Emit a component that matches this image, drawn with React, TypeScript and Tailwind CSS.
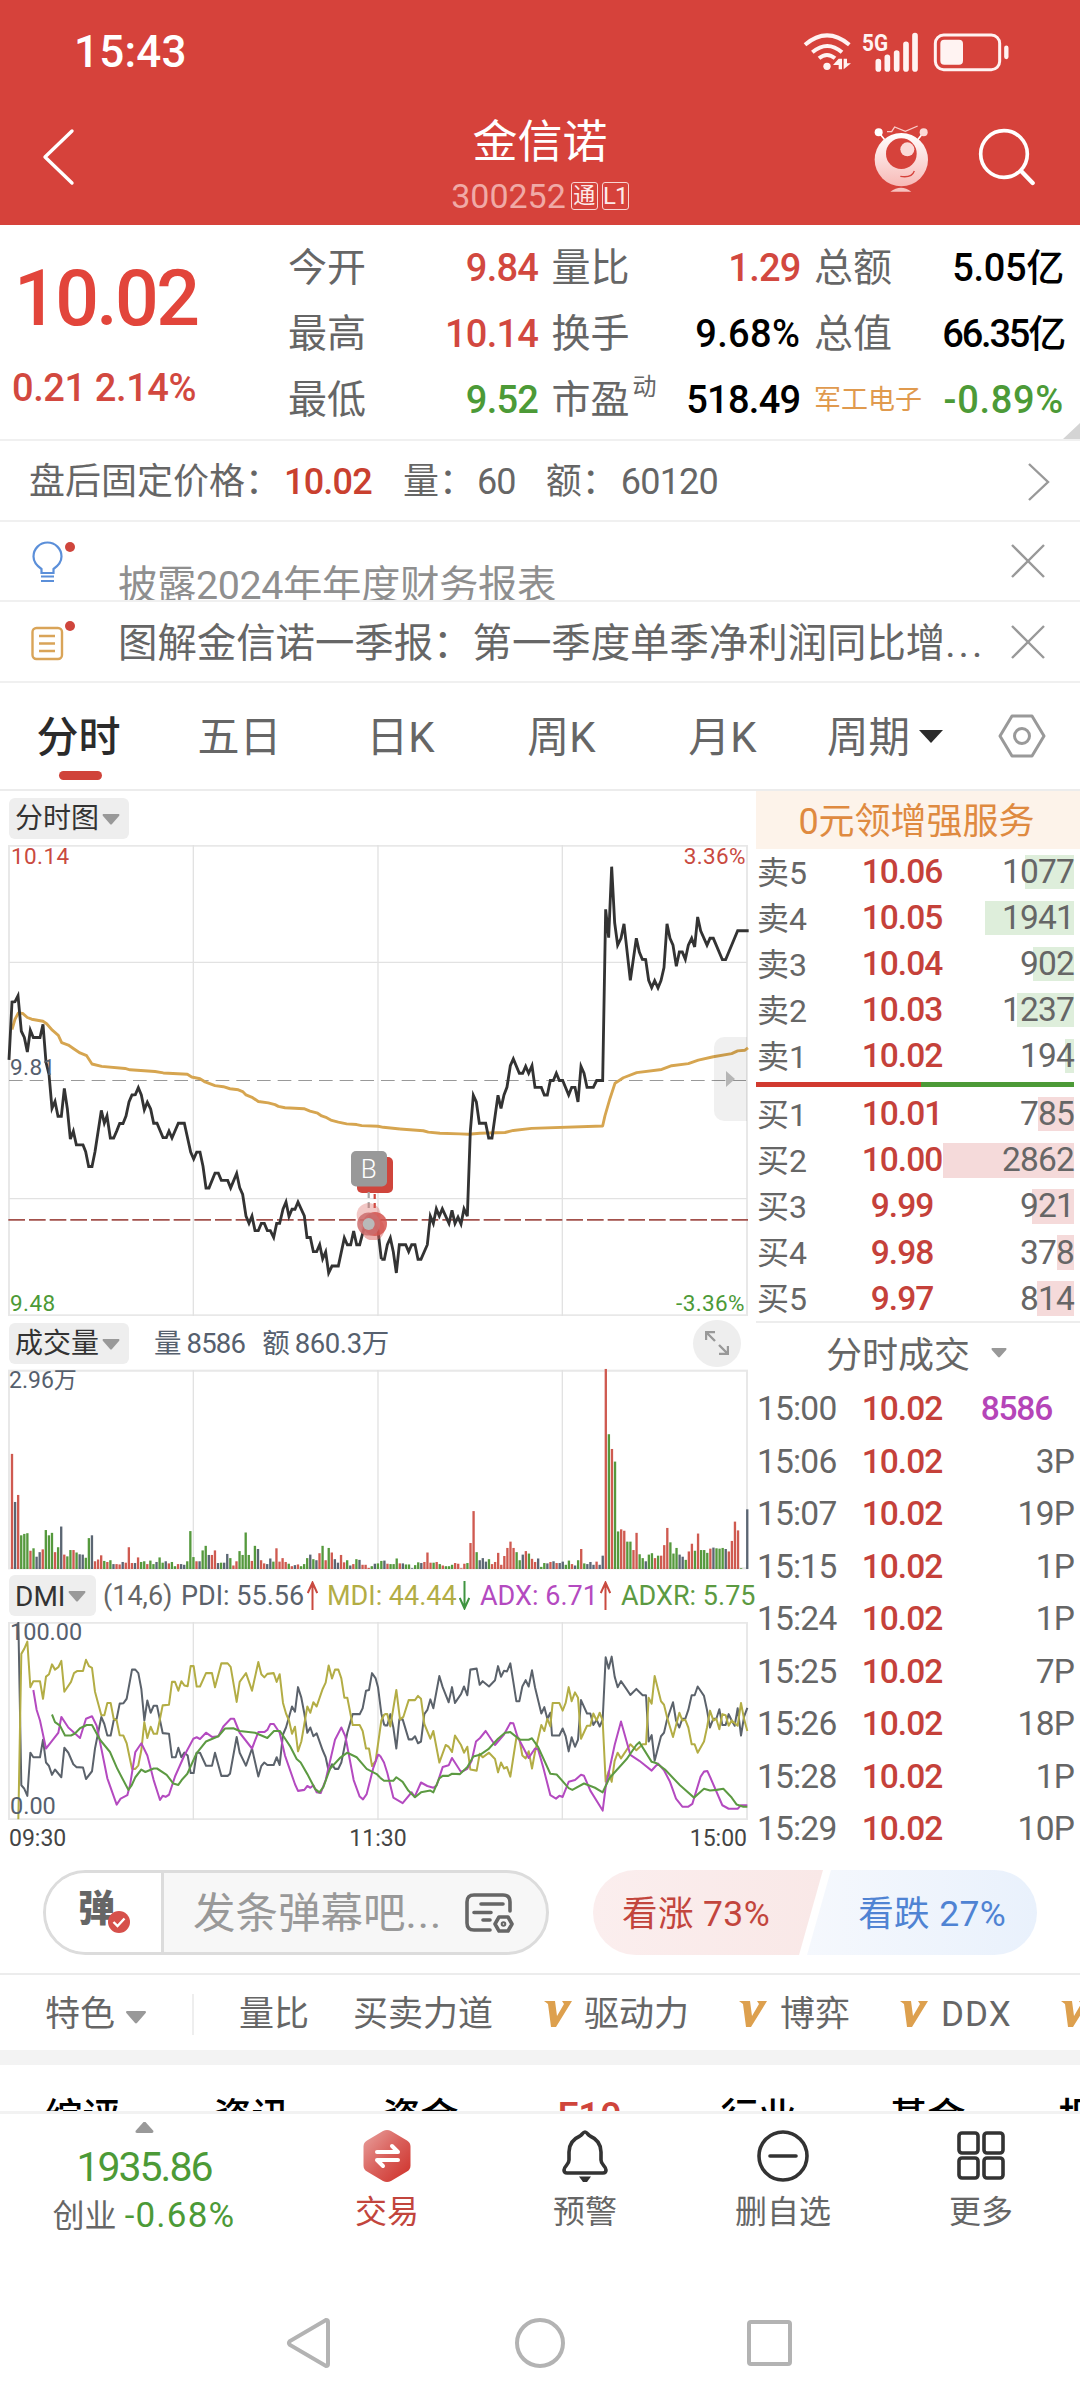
import React from 'react';
import { clsx } from 'clsx';

const PRICE_AM =
  '27,783 36,615 45,614 54,597 64,700 73,718 82,760 91,697 100,718 120,718 129,680 138,790 147,825 156,924 165,904 174,947 184,947 193,866 202,925 211,1013 220,990 229,1030 249,1030 257,1050 266,1093 276,1093 285,1050 304,930 313,967 321,946 331,1010 341,1010 350,990 359,968 369,968 378,946 387,905 396,885 406,884 415,864 424,885 433,928 442,906 452,926 461,967 471,967 489,1009 499,1009 507,990 516,1010 535,967 553,967 572,1051 581,1071 590,1051 600,1051 609,1092 618,1155 627,1155 645,1112 655,1112 664,1133 683,1133 692,1155 710,1113 719,1154 728,1174 738,1237 747,1258 756,1237 765,1279 775,1279 784,1258 793,1258 802,1279 811,1279 821,1299 830,1258 839,1258 849,1217 858,1196 867,1238 876,1217 885,1217 894,1196 913,1236 921,1299 931,1299 940,1340 950,1340 959,1320 968,1361 977,1341 986,1402 996,1382 1015,1382 1033,1300 1042,1320 1052,1320 1061,1280 1070,1320 1079,1320 1090,1280 1110,1240 1134,1279 1144,1362';
const PRICE_PM =
  '4,1362 13,1362 22,1320 31,1300 40,1341 49,1402 58,1320 77,1320 86,1340 95,1320 105,1320 114,1362 123,1362 142,1320 151,1237 160,1258 169,1216 178,1237 187,1216 207,1258 216,1220 225,1258 234,1240 243,1260 252,1216 262,1237 271,990 280,886 289,905 298,967 317,967 326,1010 336,1010 354,886 363,924 372,885 381,862 391,800 400,780 418,822 428,822 437,802 446,822 456,800 465,863 484,863 493,885 502,885 511,843 520,843 529,822 538,843 548,843 566,885 575,863 585,863 594,905 603,802 612,822 621,863 640,863 650,843 668,843 677,346 686,428 695,222 704,385 713,450 723,430 732,388 751,552 769,430 778,470 787,491 797,492 806,552 815,573 824,553 834,574 843,553 852,515 861,388 870,430 879,450 889,511 898,470 907,470 916,491 925,450 935,430 944,455 953,368 962,408 981,450 990,430 1000,430 1027,492 1037,492 1073,408 1106,408';
const AVG_AM =
  '36,695 45,665 55,647 68,648 82,660 95,665 129,671 140,678 157,697 175,712 185,733 205,740 220,750 240,763 260,771 276,795 305,802 375,808 390,812 465,817 490,821 562,825 575,833 600,838 615,847 645,858 670,861 690,867 715,870 728,875 738,885 758,893 775,904 805,908 825,913 835,918 855,922 912,925 930,932 953,938 965,946 980,951 995,959 1015,964 1040,969 1070,971 1085,974 1134,976 1150,979 1200,984';
const AVG_PM =
  '60,984 130,989 145,993 180,996 240,998 265,999 300,996 375,994 400,988 455,982 668,975 675,945 690,895 705,851 730,835 770,820 845,811 875,800 925,794 955,784 1000,774 1055,765 1073,757 1095,755 1104,748';

const VOL_AM =
  'r328 k191 r211 g96 g100 g102 r52 g59 k35 k48 r56 g111 g96 g103 r48 g62 k121 r41 g36 g54 r54 g47 k42 k41 g32 g88 k96 r22 r27 r39 g23 r20 g25 k14 r14 r13 k20 r18 r62 r17 k17 r33 g20 g22 r14 g24 g14 k20 g33 g18 k22 r16 g20 g8 r14 k14 k12 g22 g108 g34 r22 k22 g53 g66 k40 r40 r53 k17 g18 k18 k43 g31 r10 r22 g51 g40 g104 g40 r23 g66 k57 r25 r16 k14 k30 g21 r59 r21 r31 r20 g15 r8 k11 r13 g8 g14 g31 k41 g28 k25 r45 g66 r25 g60 r47 k28 k18 r40 r19 g25 k10 r14 g28 k26 r12 r12 r3 g8 k15 g16';
const VOL_PM =
  'g23 k24 r15 g14 g14 g30 r16 k16 g13 g13 k2 g11 g19 k17 r20 r47 r18 g18 r20 g14 r10 g8 g8 g12 r17 r15 r2 r15 g17 r74 r165 g48 k25 k31 k21 g28 r14 r20 r46 r12 r37 r60 r78 r60 g48 g25 k41 r51 g44 r29 r20 k30 g6 g17 k16 r20 k22 r17 k17 k21 g12 g24 r14 k10 g25 r57 g16 k14 k20 k12 r21 k12 k38 r570 g384 r342 g306 g107 r113 r109 g78 g78 r54 r103 g42 g31 k22 g41 g45 r31 g38 r38 r68 r117 g76 g44 g60 k41 k35 g26 r50 r72 g52 r101 g54 g54 g46 r58 k61 g59 g58 g60 k57 r50 r80 r135 r110 g2 g0 k170';

const DMI_LINES = [
  {
    color: '#5b626b',
    am: '55,887 64,1355 73,1365 82,1385 91,1262 100,1275 120,1275 129,1225 138,1290 147,1300 156,1325 165,1310 184,1332 193,1248 205,1262 220,1295 229,1303 249,1304 258,1337 276,1315 285,1250 304,1160 313,1180 322,1213 332,1213 341,1170 350,1165 359,1122 370,1121 380,1108 396,1025 406,1025 415,1035 424,1080 433,1170 442,1113 452,1148 461,1128 471,1128 488,1206 507,1208 516,1275 527,1275 535,1248 544,1275 553,1262 563,1270 572,1320 581,1320 590,1262 600,1262 618,1299 636,1299 645,1262 664,1328 683,1328 690,1322 710,1217 719,1262 738,1299 756,1250 775,1330 784,1300 793,1290 802,1297 821,1297 830,1275 839,1297 849,1210 858,1190 876,1130 885,1145 894,1075 904,1105 913,1150 922,1205 931,1190 940,1215 950,1207 968,1255 977,1275 986,1315 996,1295 1005,1308 1015,1308 1024,1290 1042,1205 1058,1152 1079,1152 1088,1135 1098,1085 1107,1083 1116,1035 1127,1050 1134,1075 1144,1150 1153,1184',
    pm: '13,1184 22,1184 31,1152 40,1190 49,1250 58,1167 68,1167 86,1224 96,1224 105,1215 114,1235 123,1230 133,1152 142,1140 151,1110 160,1135 178,1043 188,1075 206,1118 216,1075 225,1120 243,1095 252,1073 262,1098 271,1025 290,1022 299,1068 308,1058 327,1073 345,1055 354,1015 363,1045 372,1028 381,1030 391,1007 400,1060 409,1115 418,1115 427,1073 437,1055 446,1073 456,1027 465,1075 484,1150 493,1132 502,1165 511,1148 516,1213 538,1213 548,1193 557,1215 566,1258 575,1218 585,1245 594,1225 603,1112 621,1150 631,1150 640,1183 650,1168 659,1187 668,1168 677,990 686,1022 695,988 704,1045 713,1075 723,1058 741,1083 751,1097 769,1080 788,1098 798,1098 806,1230 815,1212 824,1285 843,1215 852,1205 861,1168 879,1118 888,1170 898,1190 907,1165 916,1165 925,1140 935,1098 944,1098 953,1073 972,1100 981,1140 990,1190 1000,1165 1009,1165 1018,1138 1027,1183 1037,1183 1046,1152 1055,1170 1064,1185 1073,1135 1083,1213 1092,1160 1102,1134',
  },
  {
    color: '#b3ad45',
    am: '55,1452 64,980 73,965 82,945 91,1075 100,1058 120,1058 129,1108 138,1045 147,1038 156,1010 165,1025 175,1018 184,1000 193,1088 213,1060 222,1035 231,1029 249,1029 258,997 267,1015 276,1020 285,1088 304,1155 313,1155 322,1120 332,1120 341,1165 350,1170 359,1212 370,1213 380,1235 396,1308 406,1308 415,1298 424,1255 433,1175 442,1220 452,1188 461,1208 471,1208 488,1127 507,1125 516,1060 525,1060 535,1085 544,1058 553,1070 563,1072 572,1015 581,1015 590,1073 600,1073 618,1035 636,1035 645,1075 664,1007 683,1007 692,1017 710,1117 719,1060 738,1035 756,1085 775,1003 784,1038 793,1047 802,1037 821,1035 830,1060 839,1038 849,1120 858,1150 867,1170 876,1208 885,1188 894,1258 904,1230 922,1130 931,1148 940,1118 950,1130 968,1080 977,1062 986,1013 996,1050 1005,1025 1015,1025 1024,1050 1033,1105 1042,1105 1058,1183 1079,1183 1088,1200 1098,1250 1107,1250 1116,1300 1127,1285 1144,1170 1153,1152',
    pm: '13,1152 22,1152 31,1187 49,1083 60,1167 70,1160 86,1112 105,1112 114,1100 123,1108 133,1180 151,1222 160,1200 178,1290 197,1240 206,1245 216,1260 225,1213 243,1240 252,1262 262,1245 271,1310 290,1313 299,1265 308,1275 327,1262 345,1280 354,1318 363,1290 372,1307 381,1303 391,1330 400,1275 409,1220 418,1222 427,1270 437,1278 446,1258 456,1307 465,1260 484,1183 493,1200 502,1165 511,1187 518,1120 538,1120 548,1142 557,1120 566,1075 575,1115 585,1090 594,1105 603,1222 621,1185 631,1185 640,1150 650,1170 659,1148 668,1170 677,1345 686,1315 695,1345 704,1285 713,1262 723,1278 751,1238 769,1255 788,1238 798,1238 806,1105 815,1122 824,1043 843,1115 852,1125 861,1160 879,1217 898,1148 907,1170 916,1168 925,1190 935,1238 944,1238 953,1262 972,1230 981,1190 990,1142 1000,1170 1009,1165 1018,1195 1027,1152 1037,1155 1046,1185 1055,1170 1073,1185 1083,1120 1092,1165 1102,1200',
  },
  {
    color: '#b44ac0',
    am: '100,1083 110,1140 120,1170 138,1250 156,1228 175,1205 184,1160 205,1190 220,1203 240,1220 258,1165 276,1158 290,1185 304,1250 322,1335 350,1410 362,1393 382,1383 390,1355 406,1260 424,1235 442,1270 461,1340 480,1397 488,1385 497,1388 507,1382 525,1330 553,1270 580,1222 590,1218 600,1223 618,1205 636,1217 655,1215 670,1187 692,1165 702,1165 719,1205 756,1250 775,1203 793,1203 802,1197 811,1180 821,1180 839,1205 855,1270 885,1352 894,1371 913,1368 922,1357 931,1362 940,1355 950,1375 962,1377 977,1340 1005,1225 1024,1190 1036,1215 1061,1340 1079,1387 1089,1395 1100,1380 1120,1305 1134,1268 1140,1270',
    pm: '0,1270 12,1290 22,1320 40,1390 68,1406 95,1375 104,1388 123,1347 142,1357 160,1362 170,1355 188,1303 206,1298 216,1277 243,1317 262,1308 275,1285 288,1230 300,1220 317,1200 345,1240 372,1210 391,1177 400,1178 412,1215 446,1277 465,1250 474,1252 490,1305 511,1383 528,1393 538,1385 548,1388 566,1345 585,1340 603,1325 612,1328 631,1370 668,1427 677,1360 704,1240 723,1173 751,1268 778,1285 815,1313 834,1293 852,1312 870,1345 888,1393 907,1416 925,1416 937,1408 962,1330 972,1316 982,1314 992,1335 1027,1412 1046,1422 1073,1422 1083,1412 1102,1412',
  },
  {
    color: '#5c9a42',
    am: '156,1153 165,1175 180,1185 195,1213 213,1213 225,1207 240,1192 260,1183 276,1183 300,1225 330,1260 352,1308 385,1368 395,1355 406,1332 424,1310 436,1317 461,1307 471,1307 500,1325 520,1350 535,1354 545,1340 562,1322 590,1263 618,1230 655,1215 675,1193 700,1192 719,1200 765,1205 802,1220 822,1200 840,1200 870,1243 890,1280 902,1290 922,1323 945,1365 958,1375 970,1360 990,1308 1020,1277 1042,1262 1070,1275 1100,1308 1130,1323 1140,1333',
    pm: '0,1333 12,1342 40,1342 49,1332 68,1345 85,1370 105,1389 123,1375 151,1370 160,1375 178,1335 188,1328 205,1328 216,1322 240,1323 262,1303 280,1273 300,1268 325,1252 354,1222 375,1205 391,1203 420,1225 446,1225 456,1221 474,1245 511,1322 530,1324 566,1363 577,1368 612,1350 645,1362 668,1375 688,1335 740,1280 769,1240 778,1232 815,1288 830,1292 855,1310 900,1355 942,1390 972,1365 990,1370 1010,1368 1030,1365 1055,1390 1070,1410 1090,1416 1102,1416',
  },
];

const BAR_COLORS: Record<string, string> = { r: '#cf5a50', g: '#55993d', k: '#5b6673' };

const ASKS = [
  { label: '卖5', price: '10.06', qty: 1077 },
  { label: '卖4', price: '10.05', qty: 1941 },
  { label: '卖3', price: '10.04', qty: 902 },
  { label: '卖2', price: '10.03', qty: 1237 },
  { label: '卖1', price: '10.02', qty: 194 },
];

const BIDS = [
  { label: '买1', price: '10.01', qty: 785 },
  { label: '买2', price: '10.00', qty: 2862 },
  { label: '买3', price: '9.99', qty: 921 },
  { label: '买4', price: '9.98', qty: 378 },
  { label: '买5', price: '9.97', qty: 814 },
];

const TICKS = [
  { time: '15:00', vol: '8586' },
  { time: '15:06', vol: '3P' },
  { time: '15:07', vol: '19P' },
  { time: '15:15', vol: '1P' },
  { time: '15:24', vol: '1P' },
  { time: '15:25', vol: '7P' },
  { time: '15:26', vol: '18P' },
  { time: '15:28', vol: '1P' },
  { time: '15:29', vol: '10P' },
];

const QUOTES = [
  { label: '今开', value: '9.84', color: 'text-[#d2483f] tracking-[-0.8px]' },
  { label: '量比', value: '1.29', color: 'text-[#d2483f] tracking-[-0.8px]' },
  { label: '总额', value: '5.05亿', color: 'text-black tracking-[-0.3px]' },
  { label: '最高', value: '10.14', color: 'text-[#d2483f] tracking-[-0.8px]' },
  { label: '换手', value: '9.68%', color: 'text-black tracking-[0.4px]' },
  { label: '总值', value: '66.35亿', color: 'text-black tracking-[-2.2px]' },
  { label: '最低', value: '9.52', color: 'text-[#4c9a37] tracking-[-0.8px]' },
  { label: '市盈', sup: '动', value: '518.49', color: 'text-black tracking-[-0.7px]' },
  { label: '军工电子', tag: true, value: '-0.89%', color: 'text-[#4c9a37] tracking-[0.7px]' },
];

const TABS = ['分时', '五日', '日K', '周K', '月K'];
const SECTIONS = ['综评', '资讯', '资金', 'F10', '行业', '基金', '报告'];

export default function App() {
  return (
    <div className="flex h-[2400px] w-[1080px] flex-col overflow-hidden bg-white font-['Roboto','Noto_Sans_CJK_SC',sans-serif] text-[#666]">
      <Header />
      <Quote />
      <FixedPrice />
      <Notices />
      <PeriodTabs />
      <div className="flex h-[1070px] shrink-0">
        <Charts />
        <OrderBook />
      </div>
      <Danmu />
      <Features />
      <div className="h-[15px] shrink-0 bg-[#f3f3f3]" />
      <div className="-ml-[2px] flex h-[46px] w-[1190px] shrink-0 items-start overflow-hidden pt-[30px]">
        {SECTIONS.map((s) => (
          <div
            key={s}
            className={clsx(
              'w-[169px] shrink-0 text-center text-[38px] leading-[44px] font-medium',
              s === 'F10' ? 'text-[#cf453c]' : 'text-black'
            )}
          >
            {s}
          </div>
        ))}
      </div>
      <BottomBar />
      <SystemNav />
    </div>
  );
}

function Header() {
  return (
    <header className="h-[225px] shrink-0 bg-[#d6423b] text-white">
      <div className="flex h-[102px] items-center justify-between pt-px pr-[66px] pl-[74px]">
        <span className="text-[44px] leading-none font-medium tracking-[0.2px]">15:43</span>
        <svg className="h-[42px] w-[214px] overflow-visible" viewBox="60 28 642 126" fill="none" stroke="#fff3f2">
          <path d="M75 69q66-56 133 0M97 92q45-38 89 0M117 110q24-20 48 0" strokeWidth="12" />
          <circle cx="141" cy="134" r="11" fill="#fff3f2" stroke="none" />
          <path d="M176 111v32h10v-32zM176 111l-17 19h17zM191 111v32l22-18h-12v-14z" fill="#fff3f2" stroke="none" />
          <text x="246" y="89" fontSize="72" fontWeight="700" textLength="78" lengthAdjust="spacingAndGlyphs" fill="#fff3f2" stroke="none">5G</text>
          <path d="M295 120v22M322 107v35M350 94v48M378 68v74M405 42v100" strokeWidth="17" strokeLinecap="round" />
          <rect x="466" y="40" width="193" height="104" rx="25" strokeWidth="9" />
          <rect x="481" y="54" width="68" height="75" rx="12" fill="#fff3f2" stroke="none" />
          <path d="M679 78v28" strokeWidth="13" strokeLinecap="round" />
        </svg>
      </div>
      <div className="grid h-[123px] grid-cols-[1fr_auto_1fr]">
        <div className="pt-[26px] pl-[41px]">
          <svg className="h-[58px] w-[34px]" viewBox="0 0 34 58" fill="none" stroke="#fff" strokeWidth="3.4">
            <path d="M31 3 4 29l27 26" strokeLinecap="round" strokeLinejoin="round" />
          </svg>
        </div>
        <div className="flex flex-col items-center">
          <div className="mt-[15px] text-[45px] leading-[52px]">金信诺</div>
          <div className="mt-[10px] flex items-center gap-[5px]">
            <span className="text-[34px] leading-[34px] text-[#f0aaa6]">300252</span>
            <span className="flex h-[28px] w-[27px] items-center justify-center rounded-[3px] border border-[#f8d5d3] text-[22px] leading-none text-[#fdebea]">通</span>
            <span className="-ml-[1px] flex h-[28px] w-[27px] items-center justify-center rounded-[3px] border border-[#f8d5d3] text-[24px] leading-none tracking-[-1px] text-[#fdebea]">L1</span>
          </div>
        </div>
        <div className="flex justify-end pr-[43px]">
          <svg className="mt-[21px] mr-[2px] h-[72px] w-[60px]" viewBox="268 305 180 216" fill="none">
            <defs>
              <linearGradient id="bot" x1="0" y1="0" x2="0" y2="1">
                <stop offset="0" stopColor="#fff" />
                <stop offset="1" stopColor="#f7b9b6" />
              </linearGradient>
            </defs>
            <path d="M291 333l18 22M426 333l-18 22" stroke="#fff" strokeWidth="5" />
            <circle cx="291" cy="333" r="12" fill="#fff" />
            <circle cx="426" cy="333" r="12" fill="#fbd9d7" />
            <path d="M316 331h14l9-14 32 13 37-16" stroke="#f9cfcc" strokeWidth="4" />
            <circle cx="359" cy="415" r="80" fill="url(#bot)" />
            <circle cx="359" cy="397" r="46" fill="#d6423b" />
            <circle cx="377" cy="384" r="21" fill="#fbd9d7" />
            <path d="M356 465q34 6 42-16" stroke="#d6423b" strokeWidth="4" />
            <path d="M326 511q32-24 63 0z" fill="#f7c3c0" />
          </svg>
          <svg className="mt-[24px] ml-[44px] h-[60px] w-[60px]" viewBox="590 320 180 180" fill="none" stroke="#fff" strokeLinecap="round">
            <circle cx="671" cy="404" r="70" strokeWidth="11" />
            <path d="M723 456l34 35" strokeWidth="13" />
          </svg>
        </div>
      </div>
    </header>
  );
}

function Quote() {
  return (
    <section className="relative flex h-[216px] shrink-0 border-b-2 border-[#f0f0f0]">
      <div className="w-[289px] shrink-0">
        <div className="mt-[41px] pl-[14px] text-[77px] leading-[66px] font-medium tracking-[-2.6px] text-[#e2453b]">10.02</div>
        <div className="mt-[36px] pl-[12px] text-[38px] leading-[40px] font-medium tracking-[-0.4px] whitespace-nowrap text-[#d2483f]">0.21 2.14%</div>
      </div>
      <div className="grid w-[774px] grid-cols-[248px_247px_248px] content-start gap-x-[15.5px] pt-[10px]">
        {QUOTES.map((q) => (
          <div key={q.label} className="-mr-px flex h-[66px] items-center justify-between">
            <span className={clsx('-ml-px whitespace-nowrap', q.tag ? 'text-[27px]' : 'text-[39px]', q.tag && 'text-[#e09a4e]')}>
              {q.label}
              {q.sup && <sup className="relative -top-[18px] ml-[3px] text-[24px]">{q.sup}</sup>}
            </span>
            <span className={clsx('text-[38px] font-medium whitespace-nowrap', q.color)}>{q.value}</span>
          </div>
        ))}
      </div>
      <svg className="absolute right-0 bottom-0 h-[16px] w-[17px]" viewBox="0 0 17 16">
        <path d="M17 0v16H0z" fill="#d4d4d4" />
      </svg>
    </section>
  );
}

function FixedPrice() {
  return (
    <section className="flex h-[81px] shrink-0 items-center border-b-2 border-[#f0f0f0] pt-[2px] pr-[29px] pl-[29px] text-[36px] leading-none">
      <span>盘后固定价格：</span>
      <span className="ml-[3px] font-medium tracking-[-0.8px] text-[#c9402f]">10.02</span>
      <span className="ml-[31px]">量：</span>
      <span className="ml-[2px] tracking-[-0.8px]">60</span>
      <span className="ml-[30px]">额：</span>
      <span className="ml-[3px] tracking-[-0.8px]">60120</span>
      <svg className="ml-auto h-[40px] w-[24px]" viewBox="0 0 24 40" fill="none" stroke="#999" strokeWidth="2.4">
        <path d="m2 2 19 18L2 38" />
      </svg>
    </section>
  );
}

function CloseIcon() {
  return (
    <svg className="h-[36px] w-[36px]" viewBox="0 0 36 36" fill="none" stroke="#999" strokeWidth="2.4">
      <path d="m2 2 32 32M34 2 2 34" />
    </svg>
  );
}

function Notices() {
  return (
    <>
      <section className="flex h-[80px] shrink-0 items-start overflow-hidden border-b-2 border-[#f0f0f0] pr-[34px] pl-[30px]">
        <svg className="mt-[17px] h-[48px] w-[50px]" viewBox="0 0 50 48" fill="none" stroke="#5b8fd9" strokeWidth="2.2">
          <path d="M11.500 34v-4c-5-3.500-8-7-8-12.500a14 14 0 0 1 28 0c0 5.500-3 9-8 12.500v4z" />
          <path d="M11 37.500h13M11 42h13" />
          <circle cx="40" cy="8" r="5" fill="#cf453c" stroke="none" />
        </svg>
        <div className="mt-[40px] ml-[38px] text-[39.4px] leading-[48px] tracking-[-0.4px] whitespace-nowrap text-[#8f8f8f]">披露2024年年度财务报表</div>
        <div className="mt-[21px] ml-auto">
          <CloseIcon />
        </div>
      </section>
      <section className="flex h-[81px] shrink-0 items-center border-b-2 border-[#f0f0f0] pr-[34px] pl-[30px]">
        <svg className="h-[48px] w-[50px]" viewBox="0 0 50 48" fill="none" stroke="#d9a458" strokeWidth="2.400">
          <rect x="2.500" y="10" width="29.500" height="31" rx="4" />
          <path d="M9 18h16M9 25.500h16M9 33h16" />
          <circle cx="40" cy="8" r="5" fill="#cf453c" stroke="none" />
        </svg>
        <div className="mt-[4px] ml-[38px] text-[39.4px] leading-[48px] whitespace-nowrap">
          图解金信诺一季报：第一季度单季净利润同比增<span className="tracking-[3px]">...</span>
        </div>
        <div className="ml-auto">
          <CloseIcon />
        </div>
      </section>
    </>
  );
}

function PeriodTabs() {
  return (
    <nav className="flex h-[108px] shrink-0 items-center border-b-2 border-[#ececec] text-[42px] leading-[50px]">
      {TABS.map((t, i) => (
        <div key={t} className={clsx('relative w-[161px] pt-[4px] pr-[4px] text-center', i === 0 && 'font-medium text-[#2b2b2b]')}>
          {t}
          {i === 0 && <div className="absolute top-[62px] left-[59px] h-[9px] w-[43px] rounded-full bg-[#d0433a]" />}
        </div>
      ))}
      <span className="ml-[22px] pt-[4px] text-[41.5px]">周期</span>
      <svg className="ml-[9px] h-[13px] w-[24px]" viewBox="0 0 24 13">
        <path d="M0 0h24L12 13z" fill="#2b2b2b" />
      </svg>
      <svg className="ml-[55px] h-[44px] w-[48px]" viewBox="0 0 48 44" fill="none" stroke="#999" strokeWidth="3">
        <path d="M14 2h20l12 20-12 20H14L2 22z" strokeLinejoin="round" />
        <circle cx="24" cy="22" r="7.500" />
      </svg>
    </nav>
  );
}

function Chip({ label }: { label: string }) {
  return (
    <div className="flex h-[41px] items-center rounded-[6px] bg-[#eee] pt-[2px] pr-[9px] pl-[6px] text-[28px] leading-none text-[#333]">
      {label}
      <svg className="ml-[3px] h-[11px] w-[18px] shrink-0" viewBox="0 0 18 11">
        <path d="M1 0h16q1 1 0 2l-7 8q-1 1-2 0L1 2q-1-1 0-2z" fill="#999" />
      </svg>
    </div>
  );
}

function Frame({ top, height, rows = [] }: { top: number; height: number; rows?: number[] }) {
  return (
    <g fill="none" stroke="#e2e2e2" strokeWidth="4">
      <rect x="27" y={top + 2} width="2214" height={height - 4} stroke="#e8e8e8" strokeWidth="6" />
      {[580, 1134, 1687].map((x) => (
        <path key={x} d={`M${x} ${top}v${height}`} />
      ))}
      {rows.map((y) => (
        <path key={y} d={`M27 ${y}h2214`} />
      ))}
    </g>
  );
}

function Bars({ data, start }: { data: string; start: number }) {
  return (
    <>
      {data.split(' ').map((d, i) => {
        const h = Number(d.slice(1));
        return <rect key={i} x={start + i * 9.225 - 3.5} y={738 - h} width="7" height={h} fill={BAR_COLORS[d[0]]} />;
      })}
    </>
  );
}

function Arrow({ down = false }: { down?: boolean }) {
  return (
    <svg className={clsx('h-[29px] w-[11px] shrink-0', down && 'rotate-180')} viewBox="0 0 11 29" fill="none" stroke={down ? '#3f9440' : '#c94a40'} strokeWidth="2">
      <path d="M5.500 29V1M.8 12 5.500 1.500 10.200 12" />
    </svg>
  );
}

function Charts() {
  return (
    <div className="flex w-[756px] shrink-0 flex-col">
      <div className="flex h-[54px] items-center pl-[9px]">
        <Chip label="分时图" />
      </div>
      <div className="relative h-[471px] text-[22.5px] leading-[24px] tracking-[0.4px]">
        <svg className="h-full w-full" viewBox="0 159 2268 1368" preserveAspectRatio="none" fill="none">
          <Frame top={159} height={1368} rows={[500, 1186]} />
          <path d="M27 843h2214" stroke="#999" strokeWidth="3" strokeDasharray="41 21" />
          <path d="M25 1248h2219" stroke="#a3514c" strokeWidth="5" strokeDasharray="50 12" />
          <g stroke="#d6a550" strokeWidth="8.5" strokeLinejoin="round">
            <polyline points={AVG_AM} />
            <polyline points={AVG_PM} transform="translate(1140 0)" />
          </g>
          <g stroke="#333" strokeWidth="8.5">
            <polyline points={PRICE_AM} />
            <polyline points={PRICE_PM} transform="translate(1140 0)" />
          </g>
        </svg>
        <span className="absolute top-[-1px] left-[11px] text-[#c94a40]">10.14</span>
        <span className="absolute top-[-1px] right-[10px] text-[#c94a40]">3.36%</span>
        <span className="absolute top-[210px] left-[10px] text-[#56606e]">9.81</span>
        <span className="absolute bottom-[1px] left-[10px] text-[#4c9a37]">9.48</span>
        <span className="absolute right-[11px] bottom-[1px] text-[#4c9a37]">-3.36%</span>
        <svg className="absolute top-[305px] left-[350px] h-[90px] w-[46px]" viewBox="0 0 46 90">
          <rect x="7" y="7" width="36" height="36" rx="5" fill="#cf453c" />
          <path d="M18.700 42v20" stroke="#aaa" strokeWidth="2.200" strokeDasharray="6 4" />
          <path d="M24.700 44v18" stroke="#cf453c" strokeWidth="2.200" strokeDasharray="5 4" />
          <circle cx="18.700" cy="65" r="12" fill="#d9605c" opacity=".35" />
          <circle cx="23" cy="79" r="11.500" fill="#d9605c" opacity=".5" />
          <circle cx="25" cy="74" r="12" fill="#d4544f" opacity=".85" />
          <circle cx="18.700" cy="74" r="11.500" fill="#cb6d6d" opacity=".85" />
          <circle cx="18.700" cy="74" r="6" fill="#b9b9b9" />
          <rect x="1" y="1" width="36" height="35.500" rx="5" fill="#999" />
          <text x="19" y="27.500" fontSize="26" fontWeight="300" textAnchor="middle" fill="#fff">B</text>
        </svg>
        <div className="absolute top-[192px] right-[9px] flex h-[84px] w-[33px] items-center justify-center rounded-l-[10px] bg-black/6">
          <svg className="h-[16px] w-[9px]" viewBox="0 0 9 16">
            <path d="M0 0l9 8-9 8z" fill="#b5b5b5" />
          </svg>
        </div>
      </div>
      <div className="flex h-[54px] items-center pr-[15px] pl-[9px] text-[27.5px] leading-none text-[#56606e]">
        <Chip label="成交量" />
        <span className="mt-[2px] ml-[25px]">量</span>
        <span className="mt-[2px] ml-[5px] tracking-[-0.8px]">8586</span>
        <span className="mt-[2px] ml-[17px]">额</span>
        <span className="mt-[2px] ml-[5px] tracking-[-0.4px]">860.3万</span>
        <div className="ml-auto flex h-[47px] w-[48px] items-center justify-center rounded-full bg-[#eee]">
          <svg className="h-[24px] w-[24px]" viewBox="0 0 24 24" fill="none" stroke="#999" strokeWidth="2.4">
            <path d="M1 9V1h9M1 1l9 9M23 15v8h-9M23 23l-9-9" />
          </svg>
        </div>
      </div>
      <div className="relative h-[199px] text-[23px] leading-[24px] text-[#56606e]">
        <svg className="h-full w-full overflow-visible" viewBox="0 171 2268 567" preserveAspectRatio="none">
          <Frame top={171} height={567} />
          <Bars data={VOL_AM} start={36} />
          <Bars data={VOL_PM} start={1144} />
        </svg>
        <span className="absolute top-[-1px] left-[9px]">2.96万</span>
      </div>
      <div className="flex h-[53px] items-center pl-[9px] text-[27px] leading-none whitespace-nowrap">
        <div className="w-[87px] shrink-0">
          <Chip label="DMI" />
        </div>
        <span className="mt-[2px] ml-[7px] w-[78px] shrink-0">(14,6)</span>
        <span className="mt-[2px] w-[126px] shrink-0 text-[#5b626b]">PDI: 55.56</span>
        <Arrow />
        <span className="mt-[2px] ml-[9px] w-[132px] shrink-0 text-[#b3ad45]">MDI: 44.44</span>
        <Arrow down />
        <span className="mt-[2px] ml-[10px] w-[120px] shrink-0 text-[#b44ac0]">ADX: 6.71</span>
        <Arrow />
        <span className="mt-[2px] ml-[10px] text-[#5c9a42]">ADXR: 5.75</span>
      </div>
      <div className="relative h-[198px] text-[23.5px] leading-[24px] text-[#56606e]">
        <svg className="h-full w-full" viewBox="0 889 2268 565" preserveAspectRatio="none" fill="none">
          <Frame top={889} height={565} />
          {DMI_LINES.map((l) => (
            <g key={l.color} stroke={l.color} strokeWidth="6" strokeLinejoin="round">
              <polyline points={l.am} />
              <polyline points={l.pm} transform="translate(1140 0)" />
            </g>
          ))}
        </svg>
        <span className="absolute top-[-2px] left-[10px]">100.00</span>
        <span className="absolute bottom-[2px] left-[10px]">0.00</span>
      </div>
      <div className="grid h-[36px] grid-cols-3 items-center pr-[9px] pl-[9px] text-[23px] leading-none text-[#444]">
        <span>09:30</span>
        <span className="text-center">11:30</span>
        <span className="text-right">15:00</span>
      </div>
    </div>
  );
}

function BookRow({ label, price, qty, ask }: { label: string; price: string; qty: number; ask?: boolean }) {
  return (
    <div className="relative flex h-[46.1px] items-center text-[33.5px] leading-none">
      <div
        className={clsx('absolute top-[6px] right-[6px] h-[34.500px]', ask ? 'bg-[#deeedb]' : 'bg-[#f5dada]')}
        style={{ width: qty * 0.0458 }}
      />
      <span className="relative mt-[2px] w-[96px] pl-[1px] text-[32px]">{label}</span>
      <span className="relative w-[100px] text-center font-medium tracking-[-1px] text-[#c5413a]">{price}</span>
      <span className="relative ml-auto pr-[6px] tracking-[-0.8px]">{qty}</span>
    </div>
  );
}

function OrderBook() {
  return (
    <div className="flex w-[324px] shrink-0 flex-col">
      <div className="flex h-[57.500px] shrink-0 items-center justify-center bg-[#fdf3ea] pt-[5px] pr-[3px] text-[36px] leading-none text-[#df8a40]">0元领增强服务</div>
      {ASKS.map((r) => (
        <BookRow key={r.label} {...r} ask />
      ))}
      <div className="flex h-[12px] items-center pr-[6px]">
        <div className="h-[5px] w-[165px] bg-[#d13a2f]" />
        <div className="h-[5px] flex-1 bg-[#4c9a37]" />
      </div>
      {BIDS.map((r) => (
        <BookRow key={r.label} {...r} />
      ))}
      <div className="flex h-[61px] items-center border-t-2 border-[#ededed] pt-[6px] pl-[70px] text-[36px] leading-none">
        分时成交
        <svg className="-mt-[5px] ml-[21px] h-[10px] w-[16px]" viewBox="0 0 18 11">
          <path d="M1 0h16q1 1 0 2l-7 8q-1 1-2 0L1 2q-1-1 0-2z" fill="#999" />
        </svg>
      </div>
      {TICKS.map((t, i) => (
        <div key={t.time} className="flex h-[52.5px] items-center pt-px text-[33.5px] leading-none tracking-[-0.8px]">
          <span className="w-[96px] pl-[1px]">{t.time}</span>
          <span className="w-[100px] text-center font-medium tracking-[-1px] text-[#c5413a]">10.02</span>
          <span className={clsx('ml-auto', i === 0 ? 'pr-[28px] font-medium tracking-[-1.2px] text-[#b545b8]' : 'pr-[6px]')}>{t.vol}</span>
        </div>
      ))}
    </div>
  );
}

function Danmu() {
  return (
    <section className="flex h-[114px] shrink-0 items-start border-b-2 border-[#ececec] pt-[9px] pl-[43px]">
      <div className="flex h-[85px] w-[506px] overflow-hidden rounded-full border-[3px] border-[#dcdcdc] bg-[#f7f7f7]">
        <div className="relative w-[118px] shrink-0 border-r-[3px] border-[#dcdcdc] bg-white pt-[13px] pl-[32px] text-[37px] leading-[48px] font-black text-[#666]">
          弹
          <svg className="absolute top-[37px] left-[61px] h-[24px] w-[24px]" viewBox="0 0 24 24" fill="none">
            <circle cx="12" cy="12" r="11" fill="#d6504b" />
            <path d="m6.500 12 4 4 7-7.500" stroke="#fff" strokeWidth="2.400" />
          </svg>
        </div>
        <div className="flex items-center pt-[3px] pl-[29px] text-[42.500px] leading-none text-[#999]">
          发条弹幕吧<span className="tracking-[1px]">...</span>
          <svg className="-mt-[3px] ml-[23px] h-[40px] w-[49px]" viewBox="0 0 49 40" fill="none" stroke="#666" strokeWidth="3.600" strokeLinecap="round">
            <path d="M25 37H9q-7 0-7-7V9q0-7 7-7h29q7 0 7 7v9" />
            <path d="M16 11h22M9 19.500h17M18 27h7" />
            <path d="M34 24h9l4 7-4 7h-9l-4-7z" strokeLinejoin="round" />
            <circle cx="38.500" cy="31" r="1" />
          </svg>
        </div>
      </div>
      <div className="relative ml-[44px] h-[85px] w-[444px]">
        <svg className="h-full w-full" viewBox="0 0 444 85">
          <defs>
            <linearGradient id="up">
              <stop offset="0" stopColor="#fbeeee" />
              <stop offset="1" stopColor="#f9e8e7" />
            </linearGradient>
            <linearGradient id="down">
              <stop offset="0" stopColor="#f5f8fd" />
              <stop offset="1" stopColor="#e9f1fc" />
            </linearGradient>
          </defs>
          <path d="M42.500 0H230l-24 85H42.500a42.500 42.500 0 0 1 0-85z" fill="url(#up)" />
          <path d="M238 0h163.500a42.500 42.500 0 0 1 0 85H214z" fill="url(#down)" />
        </svg>
        <div className="absolute inset-0 flex items-center pt-[5px] pl-[29px] text-[35.5px] leading-none tracking-[0.4px] whitespace-nowrap">
          <span className="text-[#c2453d]">看涨 73%</span>
          <span className="ml-[88px] text-[#4f83d3]">看跌 27%</span>
        </div>
      </div>
    </section>
  );
}

function VBadge() {
  return (
    <svg className="h-[26px] w-[28px] shrink-0" viewBox="0 0 28 26" fill="#dda04e">
      <path d="M0 0h11l2 15L20 3l-2-3h10L12 26H7L4 3z" />
    </svg>
  );
}

function Features() {
  return (
    <section className="flex h-[75px] shrink-0 items-center overflow-hidden pt-[3px] pl-[45px] text-[35px] leading-none whitespace-nowrap">
      <span>特色</span>
      <svg className="mt-[6px] ml-[10px] h-[13px] w-[22px] shrink-0" viewBox="0 0 18 11">
        <path d="M1 0h16q1 1 0 2l-7 8q-1 1-2 0L1 2q-1-1 0-2z" fill="#999" />
      </svg>
      <div className="ml-[45px] h-[41px] w-[2px] shrink-0 bg-[#eee]" />
      <span className="ml-[45px]">量比</span>
      <span className="ml-[44px]">买卖力道</span>
      <div className="ml-[51px] flex items-center gap-[12px]">
        <VBadge />
        驱动力
      </div>
      <div className="ml-[50px] flex items-center gap-[13px]">
        <VBadge />
        博弈
      </div>
      <div className="ml-[50px] flex items-center gap-[13px] tracking-[1px]">
        <VBadge />
        DDX
      </div>
      <div className="ml-[49px] shrink-0">
        <VBadge />
      </div>
    </section>
  );
}

function BottomBar() {
  return (
    <nav className="flex h-[150px] shrink-0 border-t-[3px] border-[#f2f2f2] bg-white text-[32px] leading-none">
      <div className="flex w-[288px] flex-col items-center">
        <svg className="mt-[8px] h-[11px] w-[19px]" viewBox="0 0 19 11">
          <path d="M8.500 0h2l8 9q0 2-1.500 2h-15Q0 11 .5 9z" fill="#999" />
        </svg>
        <span className="mt-[14px] text-[41px] leading-[40px] tracking-[-2px] text-[#4c9a37]">1935.86</span>
        <div className="mt-[11px] flex items-center whitespace-nowrap">
          创业<span className="ml-[8px] text-[35px] tracking-[1.2px] text-[#4c9a37]">-0.68%</span>
        </div>
      </div>
      <div className="flex w-[198px] flex-col items-center pt-[15px]">
        <svg className="h-[54px] w-[48px]" viewBox="0 0 48 54" fill="none">
          <defs>
            <linearGradient id="hex" x1="0" y1="0" x2="1" y2="1">
              <stop offset="0" stopColor="#e9a3a0" />
              <stop offset=".5" stopColor="#d9605b" />
              <stop offset="1" stopColor="#cf2f28" />
            </linearGradient>
          </defs>
          <path d="M20 2q4-2 8 0l16 9.500q3.500 2 3.500 6v19q0 4-3.500 6L28 52q-4 2-8 0L4 42.500q-3.500-2-3.500-6v-19q0-4 3.500-6z" fill="url(#hex)" />
          <path d="M14 23h21l-6-6M35 31H14l6 6" stroke="#fff" strokeWidth="4" strokeLinecap="round" strokeLinejoin="round" />
        </svg>
        <span className="mt-[13px] text-[#c2453d]">交易</span>
      </div>
      <div className="flex w-[198px] flex-col items-center pt-[15px]">
        <svg className="h-[54px] w-[48px]" viewBox="0 0 48 54" fill="none" stroke="#333" strokeWidth="3.600">
          <path d="M24 3c2 0 3 3 5 4 7 3 11 8 11 16v8c0 5 5 6 5 10 0 2-1 3-3 3H6c-2 0-3-1-3-3 0-4 5-5 5-10v-8C8 15 12 10 19 7c2-1 3-4 5-4z" strokeLinejoin="round" />
          <path d="M18 47.500h12l-4 5.500h-4z" fill="#333" stroke="none" />
        </svg>
        <span className="mt-[13px]">预警</span>
      </div>
      <div className="flex w-[198px] flex-col items-center pt-[15px]">
        <svg className="h-[54px] w-[54px]" viewBox="0 0 54 54" fill="none" stroke="#333" strokeWidth="3.600">
          <circle cx="27" cy="27" r="24" />
          <path d="M14 27h26" strokeLinecap="round" />
        </svg>
        <span className="mt-[13px]">删自选</span>
      </div>
      <div className="flex w-[198px] flex-col items-center pt-[15px]">
        <svg className="h-[54px] w-[48px]" viewBox="0 0 48 54" fill="none" stroke="#333" strokeWidth="3.600">
          <rect x="2" y="4" width="19" height="20" rx="3" />
          <rect x="27" y="4" width="19" height="20" rx="3" />
          <rect x="2" y="29" width="19" height="20" rx="3" />
          <rect x="27" y="29" width="19" height="20" rx="3" />
        </svg>
        <span className="mt-[13px]">更多</span>
      </div>
    </nav>
  );
}

function SystemNav() {
  return (
    <div className="flex flex-1 justify-center bg-white pt-[55px]">
      <svg className="h-[54px] w-[508px]" viewBox="286 2316 508 54" fill="none" stroke="#b3b3b3" strokeWidth="4">
        <path d="M326 2320 290 2341q-2 2 0 4l36 21q2 0 2-2v-42q0-2-2-2z" />
        <circle cx="540" cy="2343" r="23" />
        <rect x="749" y="2322" width="41" height="42" rx="2" />
      </svg>
    </div>
  );
}
